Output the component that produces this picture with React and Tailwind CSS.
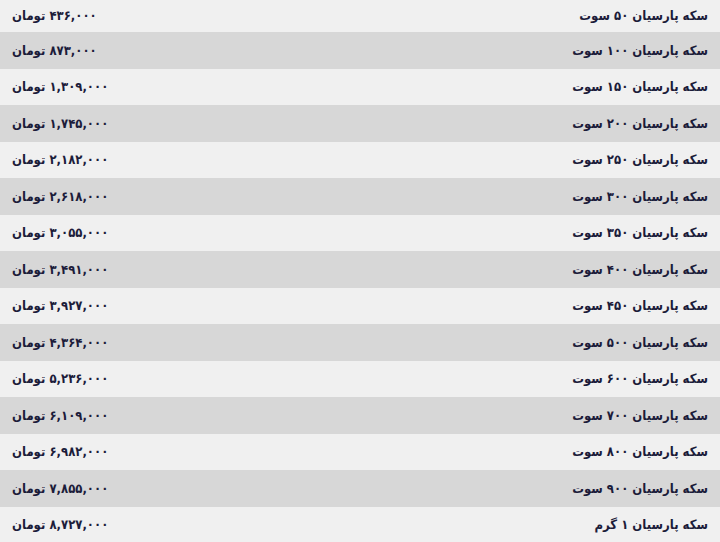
import React from "react";

const rows = [
  ["سکه پارسیان ۵۰ سوت", "۴۳۶,۰۰۰ تومان"],
  ["سکه پارسیان ۱۰۰ سوت", "۸۷۳,۰۰۰ تومان"],
  ["سکه پارسیان ۱۵۰ سوت", "۱,۳۰۹,۰۰۰ تومان"],
  ["سکه پارسیان ۲۰۰ سوت", "۱,۷۴۵,۰۰۰ تومان"],
  ["سکه پارسیان ۲۵۰ سوت", "۲,۱۸۲,۰۰۰ تومان"],
  ["سکه پارسیان ۳۰۰ سوت", "۲,۶۱۸,۰۰۰ تومان"],
  ["سکه پارسیان ۳۵۰ سوت", "۳,۰۵۵,۰۰۰ تومان"],
  ["سکه پارسیان ۴۰۰ سوت", "۳,۴۹۱,۰۰۰ تومان"],
  ["سکه پارسیان ۴۵۰ سوت", "۳,۹۲۷,۰۰۰ تومان"],
  ["سکه پارسیان ۵۰۰ سوت", "۴,۳۶۴,۰۰۰ تومان"],
  ["سکه پارسیان ۶۰۰ سوت", "۵,۲۳۶,۰۰۰ تومان"],
  ["سکه پارسیان ۷۰۰ سوت", "۶,۱۰۹,۰۰۰ تومان"],
  ["سکه پارسیان ۸۰۰ سوت", "۶,۹۸۲,۰۰۰ تومان"],
  ["سکه پارسیان ۹۰۰ سوت", "۷,۸۵۵,۰۰۰ تومان"],
  ["سکه پارسیان ۱ گرم", "۸,۷۲۷,۰۰۰ تومان"],
];

export default function App() {
  return (
    <div
      dir="rtl"
      className="w-[720px] h-[542px] overflow-hidden bg-[#f0f0f0] text-[#1c1c3a] font-bold text-[13px]"
      style={{ fontFamily: '"DejaVu Sans Condensed", "DejaVu Sans", sans-serif' }}
    >
      {rows.map(([name, price], i) => (
        <div
          key={i}
          className={
            (i === 0 ? "h-[32px] " : "h-[36.5px] ") +
            (i % 2 === 1 ? "bg-[#d7d7d7] " : "bg-[#f0f0f0] ") +
            "flex items-center justify-between pr-[12px] pl-[12px]"
          }
        >
          <span className="tracking-[-0.3px]">{name}</span>
          <span className="tracking-[-0.6px]">{price}</span>
        </div>
      ))}
    </div>
  );
}
